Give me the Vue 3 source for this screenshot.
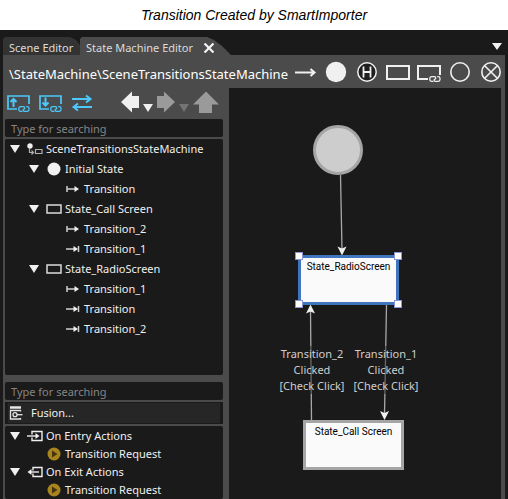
<script setup>
import { ref } from 'vue'

const link = (x, y) =>
  `<g transform="translate(${x} ${y})" fill="none" stroke="currentColor" stroke-width="1.300"><path d="M4.500 5.300H2.500A1.700 1.700 0 0 1 .8 3.600V2.400A1.700 1.700 0 0 1 2.500.7H5.500A1.200 1.200 0 0 1 6.700 1.900V2.500L5.200 3.800V4.300A1.200 1.200 0 0 0 6.300 5.300H9.300A1.700 1.700 0 0 0 11 3.600V2.400A1.700 1.700 0 0 0 9.300.7H8.200"/></g>`

const icons = {
  line: { w: 24, h: 22, body: '<path d="M2 11.500H21M17.500 8l4 3.500-4 3.500" fill="none" stroke="currentColor" stroke-width="2"/>' },
  initial: { w: 24, h: 22, body: '<circle cx="12" cy="11" r="10.200" fill="currentColor"/>' },
  history: { w: 24, h: 22, body: '<circle cx="12" cy="11" r="9.200" fill="#1f1f1f" stroke="currentColor" stroke-width="1.500"/><path d="M8.500 5.500v11M15.500 5.500v11M8.500 11h7" stroke="currentColor" stroke-width="1.800"/>' },
  state: { w: 24, h: 22, body: '<rect x="1" y="5" width="22" height="13" fill="none" stroke="currentColor" stroke-width="2"/>' },
  linked: { w: 24, h: 22, body: '<path d="M11 18H1V5h22v9" fill="none" stroke="currentColor" stroke-width="2"/>' + link(12, 15) },
  final: { w: 24, h: 22, body: '<circle cx="12" cy="11" r="9.200" fill="none" stroke="currentColor" stroke-width="1.600"/>' },
  cross: { w: 24, h: 22, body: '<circle cx="12" cy="11" r="9.200" fill="none" stroke="currentColor" stroke-width="1.600"/><path d="M5.700 4.700l12.600 12.600M18.300 4.700L5.700 17.300" stroke="currentColor" stroke-width="1.600"/>' },
  up: { w: 23, h: 18, body: '<path d="M10 15H1V2h21v8" fill="none" stroke="currentColor" stroke-width="1.700"/><path d="M6.500 13V5.500M3.500 8l3-3 3 3" fill="none" stroke="currentColor" stroke-width="2"/>' + link(11, 12) },
  down: { w: 23, h: 18, body: '<path d="M10 15H1V2h21v8" fill="none" stroke="currentColor" stroke-width="1.700"/><path d="M6.500 3.500V11M3.500 8.500l3 3 3-3" fill="none" stroke="currentColor" stroke-width="2"/>' + link(11, 12) },
  swap: { w: 22, h: 18, body: '<path d="M1 5h18M15 1.500L19.500 5 15 8.500M21 13H3M7 9.500L2.500 13 7 16.500" fill="none" stroke="currentColor" stroke-width="2"/>' },
  back: { w: 18, h: 22, body: '<path d="M0 11L11 .500V5h7v12h-7v4.500z" fill="currentColor"/>' },
  forward: { w: 18, h: 22, body: '<path d="M18 11L7 .500V5H0v12h7v4.500z" fill="currentColor"/>' },
  parent: { w: 26, h: 22, body: '<path d="M13 .500l13 13h-7V22H6v-8.500H0z" fill="currentColor"/>' },
  caret: { w: 10, h: 8, body: '<path d="M0 0h10L5 8z" fill="currentColor"/>' },
  machine: { w: 16, h: 12, body: '<circle cx="3" cy="3" r="2.700" fill="currentColor"/><path d="M2.500 5v4.500H6M4.500 7.500l2 2-2 2M8.500 6.500h6.500v4H8.500z" fill="none" stroke="#b0b0b0" stroke-width="1.200"/>' },
  dot: { w: 16, h: 14, body: '<circle cx="8" cy="7" r="6.500" fill="currentColor"/>' },
  box: { w: 16, h: 12, body: '<path d="M1 2h14v8H1z" fill="none" stroke="#dcdcdc" stroke-width="1.500"/>' },
  out: { w: 16, h: 10, body: '<path d="M2 2v6M2 5h9" stroke="#d0d0d0" stroke-width="1.500"/><path d="M9.500 2l4.500 3-4.500 3z" fill="currentColor"/>' },
  in: { w: 16, h: 10, body: '<path d="M1 5h9M13.500 2v6" stroke="#d0d0d0" stroke-width="1.500"/><path d="M8.500 2l4.500 3-4.500 3z" fill="currentColor"/>' },
  entry: { w: 16, h: 12, body: '<path d="M5 4.500V1.500h10v9H5V7.500" fill="none" stroke="currentColor" stroke-width="1.400"/><path d="M0 6h9" stroke="currentColor" stroke-width="1.400"/><path d="M8.500 3l4 3-4 3z" fill="currentColor"/>' },
  exit: { w: 16, h: 12, body: '<path d="M6 4.500V1.500h9v9H6V7.500" fill="none" stroke="currentColor" stroke-width="1.400"/><path d="M3 6h9" stroke="currentColor" stroke-width="1.400"/><path d="M4.500 3L.500 6l4 3z" fill="currentColor"/>' },
  play: { w: 16, h: 14, body: '<circle cx="8" cy="7" r="6.500" fill="#a8841f"/><path d="M6 3.500L11.500 7 6 10.500z" fill="#42350f"/>' },
  fusion: { w: 14, h: 14, body: '<path d="M1 1.500h11" stroke="#e6e6e6" stroke-width="2.500"/><path d="M11.500 5.500v-1H1.500v8.500h10v-1" fill="none" stroke="#e6e6e6" stroke-width="1.300"/><circle cx="6" cy="8.700" r="2" fill="none" stroke="#e6e6e6" stroke-width="1.300"/><path d="M8 8.700h5.500" stroke="#e6e6e6" stroke-width="1.300"/>' },
}

const shapes = [
  ['line', 'Transition'], ['initial', 'Initial state'], ['history', 'History'], ['state', 'State'],
  ['linked', 'Linked state'], ['final', 'Final state'], ['cross', 'Terminate'],
]

const tree = [
  { level: 0, icon: 'machine', text: 'SceneTransitionsStateMachine', parent: true },
  { level: 1, icon: 'dot', text: 'Initial State', parent: true },
  { level: 2, icon: 'out', text: 'Transition' },
  { level: 1, icon: 'box', text: 'State_Call Screen', parent: true },
  { level: 2, icon: 'out', text: 'Transition_2' },
  { level: 2, icon: 'in', text: 'Transition_1' },
  { level: 1, icon: 'box', text: 'State_RadioScreen', parent: true },
  { level: 2, icon: 'out', text: 'Transition_1' },
  { level: 2, icon: 'in', text: 'Transition' },
  { level: 2, icon: 'in', text: 'Transition_2' },
]

const actions = [
  { level: 0, icon: 'entry', text: 'On Entry Actions', parent: true },
  { level: 1, icon: 'play', text: 'Transition Request' },
  { level: 0, icon: 'exit', text: 'On Exit Actions', parent: true },
  { level: 1, icon: 'play', text: 'Transition Request' },
]

const nodeQuery = ref('')
const actionQuery = ref('')
</script>

<template>
  <figure class="page">
    <figcaption class="caption">Transition Created by SmartImporter</figcaption>
    <main class="editor">
      <nav class="tabs">
        <button class="tab scene">Scene Editor</button>
        <div class="tab machine">
          <button class="tab-name">State Machine Editor</button>
          <button class="close" aria-label="Close">
            <svg width="10" height="10" viewBox="0 0 10 10"><path d="M.5.5l9 9M9.500.500l-9 9" stroke="currentColor" stroke-width="2.200" /></svg>
          </button>
        </div>
        <button class="tab-list" aria-label="Tabs">
          <svg width="10" height="7" viewBox="0 0 10 7"><path d="M0 0h10L5 7z" fill="currentColor" /></svg>
        </button>
      </nav>

      <header class="bar">
        <span class="path">\StateMachine\SceneTransitionsStateMachine</span>
        <div class="shapes">
          <button v-for="[name, label] in shapes" :key="name" :aria-label="label">
            <svg :width="icons[name].w" :height="icons[name].h" v-html="icons[name].body" />
          </button>
        </div>
      </header>

      <div class="work">
        <aside class="side">
          <div class="tools">
            <div class="links">
              <button v-for="name in ['up', 'down', 'swap']" :key="name" :aria-label="name">
                <svg :width="icons[name].w" :height="icons[name].h" v-html="icons[name].body" />
              </button>
            </div>
            <div class="history">
              <button aria-label="Back"><svg width="18" height="22" v-html="icons.back.body" /></button>
              <button class="more" aria-label="Back list"><svg width="10" height="8" v-html="icons.caret.body" /></button>
              <button class="off" aria-label="Forward"><svg width="18" height="22" v-html="icons.forward.body" /></button>
              <button class="more dim" aria-label="Forward list"><svg width="10" height="8" v-html="icons.caret.body" /></button>
              <button class="off" aria-label="Parent"><svg width="26" height="22" v-html="icons.parent.body" /></button>
            </div>
          </div>

          <input v-model="nodeQuery" class="search" type="text" placeholder="Type for searching" aria-label="Search nodes" />
          <ul class="tree nodes">
            <li v-for="(row, i) in tree" :key="i" :class="'level' + row.level">
              <button v-if="row.parent" class="toggle" aria-label="Collapse"><svg width="10" height="8" v-html="icons.caret.body" /></button>
              <span v-else class="toggle"></span>
              <svg :width="icons[row.icon].w" :height="icons[row.icon].h" v-html="icons[row.icon].body" />
              <span>{{ row.text }}</span>
            </li>
          </ul>

          <input v-model="actionQuery" class="search" type="text" placeholder="Type for searching" aria-label="Search actions" />
          <div class="fusion">
            <button><svg width="14" height="14" v-html="icons.fusion.body" />Fusion...</button>
          </div>
          <ul class="tree actions">
            <li v-for="(row, i) in actions" :key="i" :class="'level' + row.level">
              <button v-if="row.parent" class="toggle" aria-label="Collapse"><svg width="10" height="8" v-html="icons.caret.body" /></button>
              <span v-else class="toggle"></span>
              <svg :width="icons[row.icon].w" :height="icons[row.icon].h" v-html="icons[row.icon].body" />
              <span>{{ row.text }}</span>
            </li>
          </ul>
        </aside>

        <section class="canvas">
          <svg class="wires">
            <g stroke="#a8a8a8" stroke-width="1.300">
              <path d="M111.500 87L113 162" />
              <path d="M82.500 332L81.500 222" />
              <path d="M157.500 217L155.500 327" />
            </g>
            <g fill="#f0f0f0">
              <path d="M113 167.500l-4.500-9 4.500 2 4.500-2z" />
              <path d="M81.500 216.500l-4.500 9 4.500-2 4.500 2z" />
              <path d="M155.500 332l-4.500-9 4.500 2 4.500-2z" />
            </g>
          </svg>
          <div class="start"></div>
          <div class="node radio">
            State_RadioScreen
            <i class="handle tl"></i><i class="handle tr"></i><i class="handle bl"></i><i class="handle br"></i>
          </div>
          <div class="node call">State_Call Screen</div>
          <p class="label two">Transition_2<br />Clicked<br />[Check Click]</p>
          <p class="label one">Transition_1<br />Clicked<br />[Check Click]</p>
        </section>
      </div>
    </main>
  </figure>
</template>

<style>
body {
  margin: 0;
  background: #1a1a1a;
}
</style>

<style scoped>
* {
  box-sizing: border-box;
}
.page {
  margin: 0;
  min-height: 100vh;
  display: flex;
  flex-direction: column;
  font: 11px/16px "Noto Sans", "Open Sans", sans-serif;
  color: #f0f0f0;
}
button {
  display: flex;
  align-items: center;
  padding: 0;
  border: 0;
  background: none;
  color: inherit;
  font: inherit;
  white-space: nowrap;
}
svg {
  display: block;
  flex: none;
}
.caption {
  height: 30px;
  background: #fff;
  color: #000;
  text-align: center;
  font: italic 14px/30px "Liberation Sans", Arial, sans-serif;
}
.editor {
  flex: 1;
  display: flex;
  flex-direction: column;
  padding: 7px 3px 0;
  background: #1a1a1a;
}
.tabs {
  display: flex;
  height: 18px;
}
.tab {
  height: 18px;
}
.scene {
  padding: 4px 6px 0;
  width: 77px;
  background: #333;
  color: #dcdcdc;
  clip-path: polygon(0 2px, 2px 0, calc(100% - 10px) 0, calc(100% - 4px) 3px, 100% 8px, 100% 100%, 0 100%);
}
.machine {
  display: flex;
  align-items: center;
  justify-content: space-between;
  padding: 4px 17px 0 6px;
  width: 151px;
  background: #4b4b4b;
  color: #dcdcdc;
  clip-path: polygon(0 2px, 2px 0, calc(100% - 24px) 0, calc(100% - 17px) 3px, calc(100% - 9px) 9px, 100% 100%, 0 100%);
}
.close {
  color: #f4f4f4;
}
.tab-list {
  margin: 0 3px 0 auto;
}
.bar {
  display: flex;
  align-items: center;
  justify-content: space-between;
  height: 33px;
  padding: 0 2px 0 6px;
  background: #4b4b4b;
}
.path {
  padding-top: 4px;
  font-size: 13px;
  color: #fff;
  white-space: nowrap;
}
.shapes {
  display: flex;
  gap: 7px;
}
.work {
  flex: 1;
  display: flex;
  padding-right: 4px;
  background: #4b4b4b;
}
.side {
  flex: none;
  display: flex;
  flex-direction: column;
  width: 226px;
  padding: 0 6px 0 2px;
}
.tools {
  display: flex;
  align-items: flex-start;
  justify-content: space-between;
  height: 31px;
  padding: 3px 4px 0 2px;
}
.links {
  display: flex;
  gap: 9px;
  padding-top: 3px;
  color: #4cc8fb;
}
.history {
  display: flex;
  gap: 4px;
}
.more {
  padding-top: 12px;
}
.off {
  color: #9a9a9a;
}
.dim {
  color: #747474;
}
.search {
  width: 100%;
  height: 18px;
  padding: 0 6px;
  border: 0;
  border-radius: 2px;
  background: #1a1a1a;
  color: #f0f0f0;
  font: inherit;
}
.search::placeholder {
  color: #858585;
  opacity: 1;
}
.tree {
  list-style: none;
  margin: 0;
  background: #1a1a1a;
  border-radius: 2px;
}
.tree li {
  display: flex;
  align-items: center;
  gap: 3px;
  white-space: nowrap;
}
.toggle {
  width: 10px;
  margin-right: 4px;
}
.level1 {
  padding-left: 19px;
}
.level2 {
  padding-left: 38px;
}
.nodes {
  height: 236px;
  margin: 2px 0 7px;
  padding: 0 5px;
}
.nodes li {
  height: 20px;
}
.fusion {
  margin: 2px 0;
  padding: 1px 3px;
  background: #1a1a1a;
}
.fusion button {
  width: 100%;
  height: 20px;
  gap: 8px;
  padding-left: 1px;
  background: #262626;
}
.actions {
  flex: 1;
  padding: 1px 5px 0;
}
.actions li {
  height: 18px;
}
.canvas {
  position: relative;
  flex: 1;
  overflow: hidden;
  background: #1a1a1a;
}
.wires {
  position: absolute;
  inset: 0;
  width: 100%;
  height: 100%;
}
.start {
  position: absolute;
  left: 84px;
  top: 37px;
  width: 50px;
  height: 50px;
  border: 3px solid #a5a5a5;
  border-radius: 50%;
  background: #cdcdcd;
}
.node {
  position: absolute;
  width: 101px;
  height: 50px;
  border: 3px solid #a5a5a5;
  background: #fafafa;
  color: #000;
  text-align: center;
  white-space: nowrap;
  font: 10px/18px Roboto, sans-serif;
}
.radio {
  left: 69px;
  top: 167px;
  border-color: #4076bd;
}
.call {
  left: 74px;
  top: 332px;
}
.handle {
  position: absolute;
  width: 8px;
  height: 8px;
  border: 1px solid #8c96d4;
  background: #fff;
}
.tl {
  left: -6px;
  top: -6px;
}
.tr {
  right: -6px;
  top: -6px;
}
.bl {
  left: -6px;
  bottom: -6px;
}
.br {
  right: -6px;
  bottom: -6px;
}
.label {
  position: absolute;
  top: 258px;
  width: 74px;
  margin: 0;
  background: rgb(26 26 26 / 45%);
  color: #cfcfcf;
  text-align: center;
  white-space: nowrap;
}
.two {
  left: 46px;
}
.one {
  left: 120px;
}
</style>
